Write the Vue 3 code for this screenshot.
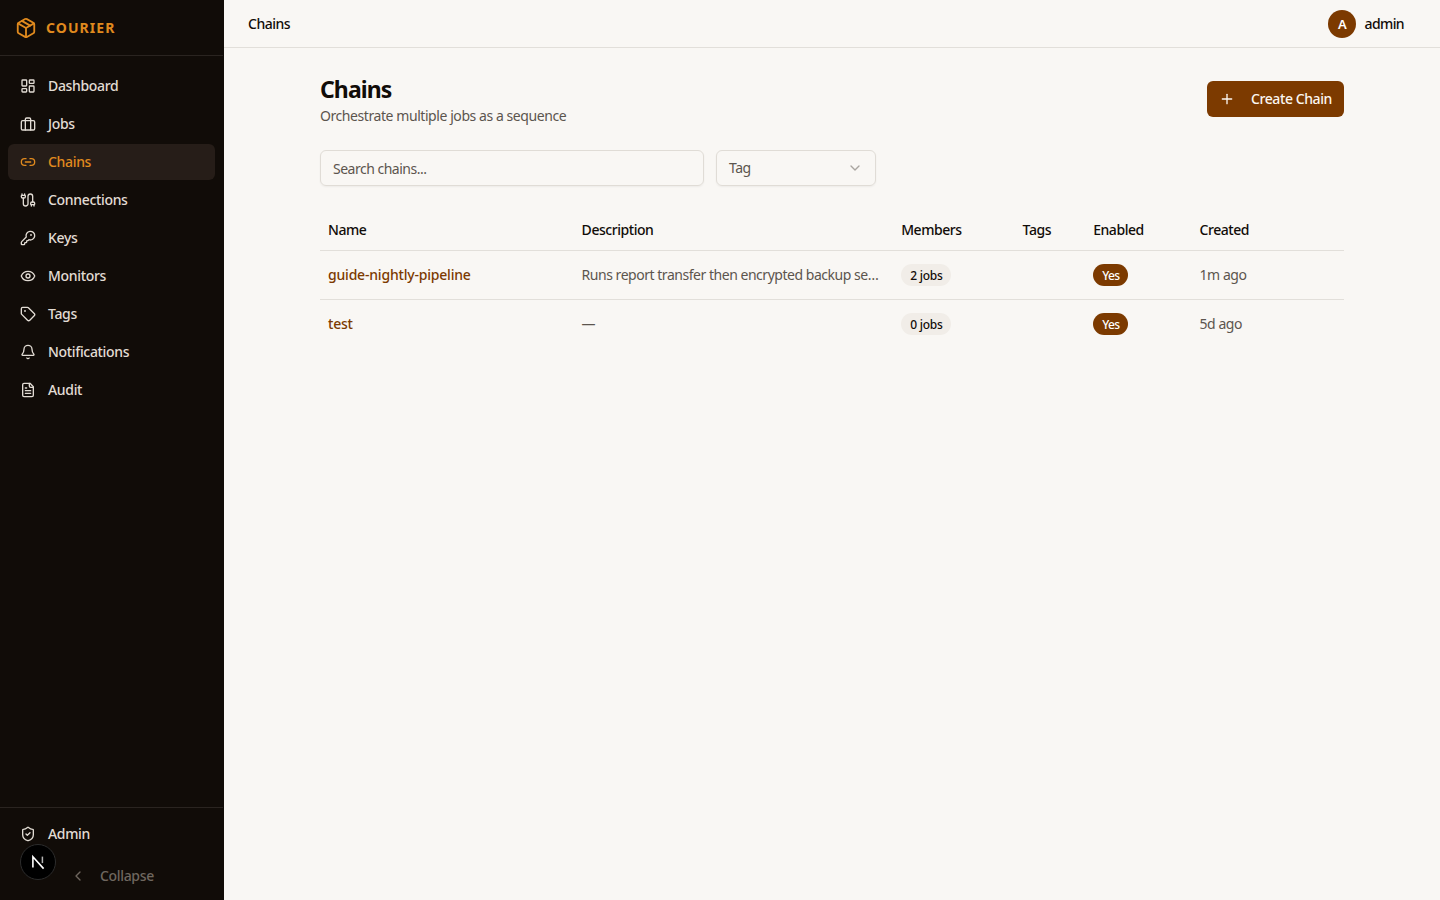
<script setup>
const nav = [
  { label: 'Dashboard', icon: 'dash' },
  { label: 'Jobs', icon: 'jobs' },
  { label: 'Chains', icon: 'link', active: true },
  { label: 'Connections', icon: 'cable' },
  { label: 'Keys', icon: 'key' },
  { label: 'Monitors', icon: 'eye' },
  { label: 'Tags', icon: 'tag' },
  { label: 'Notifications', icon: 'bell' },
  { label: 'Audit', icon: 'file' },
]
const rows = [
  { name: 'guide-nightly-pipeline', desc: 'Runs report transfer then encrypted backup se…', members: '2 jobs', created: '1m ago' },
  { name: 'test', desc: '—', members: '0 jobs', created: '5d ago' },
]
</script>

<template>
  <div class="shell">
    <aside class="sidebar">
      <div class="brand">
        <svg class="brand-icon" viewBox="0 0 24 24"><path d="M11 21.73a2 2 0 0 0 2 0l7-4A2 2 0 0 0 21 16V8a2 2 0 0 0-1-1.73l-7-4a2 2 0 0 0-2 0l-7 4A2 2 0 0 0 3 8v8a2 2 0 0 0 1 1.73z"/><path d="M12 22V12"/><path d="M3.3 7 12 12l8.7-5"/><path d="m7.5 4.27 9 5.15"/></svg>
        <span class="brand-name">COURIER</span>
      </div>
      <nav class="nav">
        <a v-for="item in nav" :key="item.label" class="nav-item" :class="{ active: item.active }">
          <svg class="icon" viewBox="0 0 24 24">
            <template v-if="item.icon === 'dash'"><rect x="3" y="3" width="7" height="9" rx="1"/><rect x="14" y="3" width="7" height="5" rx="1"/><rect x="14" y="12" width="7" height="9" rx="1"/><rect x="3" y="16" width="7" height="5" rx="1"/></template>
            <template v-else-if="item.icon === 'jobs'"><rect x="2" y="7" width="20" height="14" rx="2"/><path d="M16 21V5a2 2 0 0 0-2-2h-4a2 2 0 0 0-2 2v16"/></template>
            <template v-else-if="item.icon === 'link'"><path d="M9 17H7A5 5 0 0 1 7 7h2"/><path d="M15 7h2a5 5 0 1 1 0 10h-2"/><path d="M8 12h8"/></template>
            <template v-else-if="item.icon === 'cable'"><path d="M17 21v-2a1 1 0 0 1-1-1v-1a2 2 0 0 1 2-2h2a2 2 0 0 1 2 2v1a1 1 0 0 1-1 1"/><path d="M19 15V6.5a1 1 0 0 0-7 0v11a1 1 0 0 1-7 0V9"/><path d="M21 21v-2h-4"/><path d="M3 5h4V3"/><path d="M7 5a1 1 0 0 1 1 1v1a2 2 0 0 1-2 2H4a2 2 0 0 1-2-2V6a1 1 0 0 1 1-1V3"/></template>
            <template v-else-if="item.icon === 'key'"><path d="M2.586 17.414A2 2 0 0 0 2 18.828V21a1 1 0 0 0 1 1h3a1 1 0 0 0 1-1v-1a1 1 0 0 1 1-1h1a1 1 0 0 0 1-1v-1a1 1 0 0 1 1-1h.172a2 2 0 0 0 1.414-.586l.814-.814a6.5 6.5 0 1 0-4-4z"/><circle cx="16.5" cy="7.5" r=".5"/></template>
            <template v-else-if="item.icon === 'eye'"><path d="M2.062 12.348a1 1 0 0 1 0-.696 10.75 10.75 0 0 1 19.876 0 1 1 0 0 1 0 .696 10.75 10.75 0 0 1-19.876 0"/><circle cx="12" cy="12" r="3"/></template>
            <template v-else-if="item.icon === 'tag'"><path d="M12.586 2.586A2 2 0 0 0 11.172 2H4a2 2 0 0 0-2 2v7.172a2 2 0 0 0 .586 1.414l8.704 8.704a2.426 2.426 0 0 0 3.42 0l6.58-6.58a2.426 2.426 0 0 0 0-3.42z"/><circle cx="7.5" cy="7.5" r=".5"/></template>
            <template v-else-if="item.icon === 'bell'"><path d="M10.268 21a2 2 0 0 0 3.464 0"/><path d="M3.262 15.326A1 1 0 0 0 4 17h16a1 1 0 0 0 .74-1.673C19.41 13.956 18 12.499 18 8A6 6 0 0 0 6 8c0 4.499-1.411 5.956-2.738 7.326"/></template>
            <template v-else><path d="M15 2H6a2 2 0 0 0-2 2v16a2 2 0 0 0 2 2h12a2 2 0 0 0 2-2V7Z"/><path d="M14 2v4a2 2 0 0 0 2 2h4"/><path d="M10 9H8"/><path d="M16 13H8"/><path d="M16 17H8"/></template>
          </svg>
          <span class="label">{{ item.label }}</span>
        </a>
      </nav>
      <div class="side-foot">
        <a class="nav-item">
          <svg class="icon" viewBox="0 0 24 24"><path d="M20 13c0 5-3.5 7.5-7.66 8.95a1 1 0 0 1-.67-.01C7.5 20.5 4 18 4 13V6a1 1 0 0 1 1-1c2 0 4.5-1.2 6.24-2.72a1.17 1.17 0 0 1 1.52 0C14.51 3.81 17 5 19 5a1 1 0 0 1 1 1z"/><path d="m9 12 2 2 4-4"/></svg>
          <span class="label">Admin</span>
        </a>
        <div class="collapse-row">
          <svg class="chev" viewBox="0 0 24 24"><path d="m15 18-6-6 6-6"/></svg>
          <span class="label">Collapse</span>
        </div>
      </div>
      <div class="dev-badge">
        <svg viewBox="0 0 18 18" width="18" height="18"><path d="M3.9 14.4V3.8L14.6 15.6" fill="none" stroke="#fff" stroke-width="1.6"/><path d="M13.4 3.6v6.5" fill="none" stroke="#fff" stroke-width="1.5" opacity=".7"/></svg>
      </div>
    </aside>

    <div class="page">
      <header class="topbar">
        <span class="crumb">Chains</span>
        <div class="user">
          <span class="avatar">A</span>
          <span class="user-name">admin</span>
        </div>
      </header>
      <main class="main">
        <div class="content">
          <div class="head">
            <div>
              <h1>Chains</h1>
              <p>Orchestrate multiple jobs as a sequence</p>
            </div>
            <button class="create">
              <svg viewBox="0 0 24 24"><path d="M5 12h14"/><path d="M12 5v14"/></svg>
              <span class="create-label">Create Chain</span>
            </button>
          </div>
          <div class="filters">
            <input class="search" placeholder="Search chains..." />
            <div class="select">
              <span class="select-label">Tag</span>
              <svg viewBox="0 0 24 24"><path d="m6 9 6 6 6-6"/></svg>
            </div>
          </div>
          <table class="table">
            <colgroup>
              <col class="c1" />
              <col class="c2" />
              <col class="c3" />
              <col class="c4" />
              <col class="c5" />
              <col />
            </colgroup>
            <thead>
              <tr>
                <th>Name</th><th>Description</th><th>Members</th><th>Tags</th><th>Enabled</th><th>Created</th>
              </tr>
            </thead>
            <tbody>
              <tr v-for="r in rows" :key="r.name">
                <td><a class="link">{{ r.name }}</a></td>
                <td class="muted desc">{{ r.desc }}</td>
                <td><span class="pill">{{ r.members }}</span></td>
                <td></td>
                <td><span class="pill on">Yes</span></td>
                <td class="muted">{{ r.created }}</td>
              </tr>
            </tbody>
          </table>
        </div>
      </main>
    </div>
  </div>
</template>

<style>
html, body { margin: 0; background: #f9f7f4; }
</style>

<style scoped>
.shell {
  display: flex;
  height: 900px;
  overflow: hidden;
  font-family: "Noto Sans", sans-serif;
  font-size: 14px;
  color: #110c08;
  background: #f9f7f4;
}
.sidebar {
  position: relative;
  flex: 0 0 224px;
  box-sizing: border-box;
  display: flex;
  flex-direction: column;
  background: #110c08;
  border-right: 1px solid #110c08;
  color: #e2dcd4;
}
.brand {
  height: 56px;
  box-sizing: border-box;
  display: flex;
  align-items: center;
  gap: 9px;
  padding: 0 16px 0 15px;
  border-bottom: 1px solid #2a2420;
}
.brand-icon, .icon, .chev, .create svg, .select svg {
  fill: none;
  stroke: currentColor;
  stroke-width: 2;
  stroke-linecap: round;
  stroke-linejoin: round;
}
.brand-icon { color: #e08a1e; width: 22px; height: 22px; flex: none; }
.brand-name {
  color: #e08a1e;
  font-size: 14px;
  font-weight: 700;
  letter-spacing: 1.05px;
}
.nav {
  flex: 1;
  display: flex;
  flex-direction: column;
  gap: 2px;
  padding: 12px 8px;
}
.nav-item {
  height: 36px;
  display: flex;
  align-items: center;
  gap: 12px;
  padding: 0 12px;
  border-radius: 6px;
  font-weight: 500;
}
.label { letter-spacing: -0.33px; padding-bottom: 2px; }
.nav-item .icon { width: 16px; height: 16px; flex: none; }
.nav-item.active { background: #261d18; color: #e08a1e; }
.side-foot {
  border-top: 1px solid #2a2420;
  padding: 8px 8px 6px;
  height: 93px;
  box-sizing: border-box;
}
.collapse-row {
  display: flex;
  align-items: center;
  gap: 14px;
  height: 36px;
  margin-top: 6px;
  padding-left: 62px;
  color: #6f675f;
  font-weight: 500;
}
.chev { width: 16px; height: 16px; }
.dev-badge {
  position: absolute;
  left: 20px;
  top: 844px;
  width: 36px;
  height: 36px;
  box-sizing: border-box;
  border-radius: 50%;
  background: #000;
  border: 1px solid #2c2c2c;
  display: flex;
  align-items: center;
  justify-content: center;
}
.page { flex: 1; display: flex; flex-direction: column; min-width: 0; }
.topbar {
  height: 48px;
  box-sizing: border-box;
  display: flex;
  align-items: center;
  justify-content: space-between;
  padding: 0 36px 0 24px;
  border-bottom: 1px solid #e2dfda;
}
.crumb { font-weight: 500; letter-spacing: -0.5px; }
.user { display: flex; align-items: center; gap: 8px; }
.avatar {
  width: 28px;
  height: 28px;
  border-radius: 50%;
  background: #7c3a00;
  color: #fff;
  display: flex;
  align-items: center;
  justify-content: center;
  font-size: 13px;
  font-weight: 600;
}
.user-name { font-weight: 500; letter-spacing: -0.6px; }
.main { flex: 1; padding: 24px 96px; }
.content { width: 1024px; }
.head { display: flex; justify-content: space-between; align-items: center; }
h1 { margin: 0; font-size: 23px; font-weight: 700; line-height: 34px; letter-spacing: -0.9px; }
.head p { margin: 0; color: #5c554e; line-height: 20px; letter-spacing: -0.43px; }
.create {
  height: 36px;
  display: flex;
  align-items: center;
  gap: 16px;
  padding: 0 12px;
  border: 0;
  border-radius: 6px;
  background: #7c3a00;
  color: #fbf7f2;
  font: 500 14px "Noto Sans", sans-serif;
}
.create-label { letter-spacing: -0.4px; padding-bottom: 2px; }
.create svg { width: 16px; height: 16px; }
.filters { display: flex; gap: 12px; margin-top: 24px; }
.search, .select {
  height: 36px;
  box-sizing: border-box;
  border: 1px solid #e0dcd6;
  border-radius: 6px;
  background: transparent;
  box-shadow: 0 1px 2px rgba(0,0,0,.05);
  font: 400 14px "Noto Sans", sans-serif;
}
.search { width: 384px; padding: 1px 12px 0; outline: none; color: #110c08; letter-spacing: -0.5px; }
.search::placeholder { color: #5c554e; opacity: 1; }
.select {
  width: 160px;
  display: flex;
  align-items: center;
  justify-content: space-between;
  padding: 0 12px;
  color: #5c554e;
}
.select-label { letter-spacing: -0.5px; padding-bottom: 2px; }
.select svg { width: 16px; height: 16px; opacity: .5; }
.table {
  width: 1024px;
  margin-top: 24px;
  border-collapse: collapse;
  table-layout: fixed;
}
.c1 { width: 253.6px; }
.c2 { width: 319.6px; }
.c3 { width: 121.4px; }
.c4 { width: 70.6px; }
.c5 { width: 106.4px; }
th {
  height: 40px;
  padding: 0 8px;
  text-align: left;
  font-weight: 500;
  letter-spacing: -0.45px;
  border-bottom: 1px solid #e2dfda;
  box-sizing: border-box;
}
td { height: 49px; padding: 0 8px; box-sizing: border-box; }
tbody tr:not(:last-child) td { border-bottom: 1px solid #e2dfda; }
.muted { color: #5c554e; letter-spacing: -0.45px; }
.desc { white-space: nowrap; letter-spacing: -0.47px; }
.link { color: #7c3a00; font-weight: 500; letter-spacing: -0.2px; }
.pill {
  display: inline-flex;
  align-items: center;
  height: 22px;
  padding: 1px 8px 0 9px;
  box-sizing: border-box;
  vertical-align: middle;
  border-radius: 999px;
  background: #f1ede8;
  color: #110c08;
  font-size: 12px;
  font-weight: 500;
  letter-spacing: -0.25px;
}
.pill.on { background: #7c3a00; color: #fff; letter-spacing: -0.6px; }
</style>
